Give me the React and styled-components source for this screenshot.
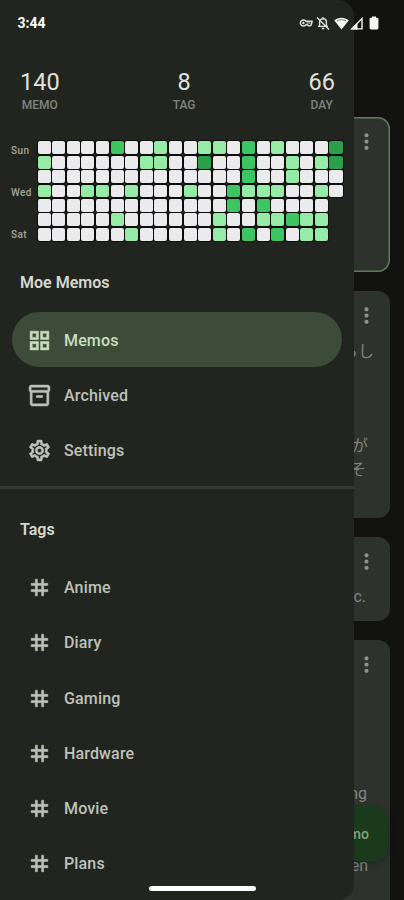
import React from 'react';
import styled, { createGlobalStyle } from 'styled-components';
import {
  MdOutlineGridView,
  MdOutlineInventory2,
  MdOutlineSettings,
  MdTag,
  MdMoreVert,
} from 'react-icons/md';

const stats = [
  { value: 140, label: 'MEMO' },
  { value: 8, label: 'TAG' },
  { value: 66, label: 'DAY' },
];

// one string per weekday, one digit per week (0 = no memos)
const weeks = [
  '000002001001102010003',
  '100000011003002001013',
  '000000000000002001000',
  '100110100010021110010',
  '00000000000002020000',
  '00000100000010011211',
  '00000010000010202011',
];

const levels = ['#ebeaec', '#96eba6', '#3cc560', '#2b9f4a'];

const menu = [
  { name: 'Memos', icon: MdOutlineGridView, active: true },
  { name: 'Archived', icon: MdOutlineInventory2 },
  { name: 'Settings', icon: MdOutlineSettings },
];

const tags = ['Anime', 'Diary', 'Gaming', 'Hardware', 'Movie', 'Plans'];

const StatusIcons = () => (
  <Icons>
    <svg width="14" height="10" viewBox="0 0 14 10">
      <path
        d="M7 3.2A3.1 3.1 0 1 0 7 6.8H8.4L10 8L12 7.4L13.2 3.2Z"
        fill="none"
        stroke="#dfe1dc"
        strokeWidth="1.5"
        strokeLinejoin="round"
      />
      <circle cx="4.4" cy="5" r="1.2" fill="#dfe1dc" />
      <path d="M7.5 5H11.5" stroke="#dfe1dc" strokeWidth="1" />
    </svg>
    <svg width="14" height="14" viewBox="0 0 14 14" fill="none" stroke="#dfe1dc" strokeWidth="1.4">
      <path d="M3.6 10V6.2C3.6 4.2 5 2.8 7 2.8S10.4 4.2 10.4 6.2V10M2 10.4h10M7 1v1.6" />
      <path d="M1 1.4l12 12" />
      <path d="M5.8 12.5h2.4" strokeWidth="1.6" />
    </svg>
    <svg width="15" height="13" viewBox="0 0 15 13">
      <path d="M0.3 3.6C4.3-.2 10.7-.2 14.7 3.6L7.5 12.6Z" fill="#f4f5f2" />
      <path d="M3 3.9C5.6 2.3 9.4 2.3 12 3.9" stroke="#6b6e68" strokeWidth=".9" fill="none" />
    </svg>
    <svg width="13" height="13" viewBox="0 0 13 13">
      <path d="M1.6 11.9L12 1.6V11.9Z" fill="none" stroke="#f4f5f2" strokeWidth="1.4" />
      <path d="M1 12.4L7.5 6V12.4Z" fill="#f4f5f2" />
    </svg>
    <svg width="10" height="14" viewBox="0 0 10 14">
      <path d="M3 .4h4v1.4h1.1q1.3 0 1.3 1.3v9q0 1.3-1.3 1.3H1.9Q.6 13.4.6 12.1v-9Q.6 1.8 1.9 1.8H3Z" fill="#f4f5f2" />
    </svg>
  </Icons>
);

const Heatmap = () => (
  <Calendar>
    <Days>
      <span>Sun</span>
      <span>Wed</span>
      <span>Sat</span>
    </Days>
    <Grid>
      {weeks.map((week, row) =>
        week.split('').map((level, col) => (
          <Cell key={`${row}-${col}`} $row={row + 1} $col={col + 1} $color={levels[level]} />
        ))
      )}
    </Grid>
  </Calendar>
);

const App = () => {
  return (
    <Screen>
      <GlobalStyle />
      <Feed>
        <Card $height={155} $pinned>
          <More />
        </Card>
        <Card $height={227}>
          <More />
          <Line $top={12} $right={16}>らし</Line>
          <Line $top={70} $right={22}>が</Line>
          <Line $right={24}>そ</Line>
        </Card>
        <Card $height={84}>
          <More />
          <Line $top={11} $right={24}>c.</Line>
        </Card>
        <Card $height={290}>
          <More />
          <Line $top={105} $right={23}>ng</Line>
          <Line $top={48} $right={22}>en</Line>
        </Card>
      </Feed>
      <NewMemo>mo</NewMemo>

      <Drawer>
        <Stats>
          {stats.map((stat) => (
            <Stat key={stat.label}>
              <h2>{stat.value}</h2>
              <h4>{stat.label}</h4>
            </Stat>
          ))}
        </Stats>
        <Heatmap />
        <Title>Moe Memos</Title>
        <List>
          {menu.map(({ name, icon: Icon, active }) => (
            <Item key={name} $active={active}>
              <Icon size={25} />
              {name}
            </Item>
          ))}
        </List>
        <Divider />
        <Title>Tags</Title>
        <List>
          {tags.map((tag) => (
            <Item key={tag}>
              <MdTag size={25} />
              {tag}
            </Item>
          ))}
        </List>
      </Drawer>

      <StatusBar>
        <Clock>3:44</Clock>
        <StatusIcons />
      </StatusBar>
      <HomeBar />
    </Screen>
  );
};

export default App;

const GlobalStyle = createGlobalStyle`
  * {
    box-sizing: border-box;
    margin: 0;
    padding: 0;
  }
  body {
    background: #121310;
    font-family: Roboto, "Noto Sans CJK JP", sans-serif;
  }
`;

const Screen = styled.div`
  position: relative;
  width: 404px;
  height: 900px;
  overflow: hidden;
  background: #121310;
`;

const Feed = styled.main`
  display: flex;
  flex-direction: column;
  gap: 19px;
  padding: 117px 14px 0;
`;

const Card = styled.article`
  display: flex;
  flex-direction: column;
  align-items: flex-end;
  flex-shrink: 0;
  height: ${(props) => props.$height}px;
  padding-top: 12px;
  border-radius: 12px;
  background: #2e322d;
  box-shadow: ${(props) => (props.$pinned ? 'inset 0 0 0 1.5px #60795e' : 'none')};
`;

const More = styled(MdMoreVert).attrs({ size: 25 })`
  flex-shrink: 0;
  margin-right: 11px;
  color: #8f928c;
`;

const Line = styled.p`
  margin-top: ${(props) => props.$top || 0}px;
  margin-right: ${(props) => props.$right}px;
  color: #80847e;
  font-size: 16px;
  line-height: 24px;
`;

const NewMemo = styled.button`
  position: absolute;
  right: 16px;
  bottom: 39px;
  width: 110px;
  height: 55px;
  padding-right: 19px;
  border: none;
  border-radius: 14px;
  background: #1b3a1b;
  box-shadow: 0 3px 6px rgba(0, 0, 0, 0.25);
  color: #82a57e;
  font: 500 14px Roboto, sans-serif;
  text-align: right;
`;

const Drawer = styled.nav`
  position: absolute;
  inset: 0 auto 0 0;
  width: 354px;
  padding-top: 67px;
  border-radius: 0 16px 16px 0;
  background: #22251f;
  overflow: hidden;
`;

const Stats = styled.div`
  display: flex;
  justify-content: space-between;
  padding: 0 19px 0 20px;
`;

const Stat = styled.div`
  display: flex;
  flex-direction: column;
  align-items: center;
  & h2 {
    color: #e0e2dc;
    font-size: 23.5px;
    font-weight: 400;
    line-height: 30px;
  }
  & h4 {
    color: #80837d;
    font-size: 12px;
    font-weight: 500;
    line-height: 16px;
  }
`;

const Calendar = styled.div`
  display: flex;
  height: 101px;
  margin-top: 28.4px;
  padding-left: 11px;
`;

const Days = styled.div`
  display: flex;
  flex-direction: column;
  justify-content: space-between;
  flex-shrink: 0;
  width: 26.6px;
  padding: 3px 0 0;
  color: #a2a59e;
  font-size: 10px;
  font-weight: 500;
  line-height: 14px;
  letter-spacing: 0.4px;
`;

const Grid = styled.div`
  display: grid;
  grid-template-columns: repeat(21, 13.1px);
  grid-template-rows: repeat(7, 12.9px);
  gap: 1.5px;
`;

const Cell = styled.i`
  grid-row: ${(props) => props.$row};
  grid-column: ${(props) => props.$col};
  border-radius: 2px;
  background: ${(props) => props.$color};
  box-shadow: 0 0 0 1px #0c0e0b;
`;

const Title = styled.h3`
  padding: 30.4px 20px 0;
  color: #d6d9d1;
  font-size: 16px;
  font-weight: 600;
  line-height: 20px;
`;

const List = styled.ul`
  padding: 19.4px 12px 8.6px;
  list-style: none;
`;

const Item = styled.li`
  display: flex;
  align-items: center;
  gap: 12px;
  height: 55.1px;
  padding: 1px 0 0 15px;
  border-radius: 28px;
  background: ${(props) => (props.$active ? '#3d4b39' : 'transparent')};
  color: ${(props) => (props.$active ? '#c9dfc0' : '#bfc2b9')};
  font-size: 16px;
  font-weight: 500;
  letter-spacing: 0.15px;
  & path:not([fill='none']) {
    stroke: currentColor;
    stroke-width: 0.5px;
  }
`;

const Divider = styled.hr`
  height: 3px;
  margin-bottom: 1px;
  border: none;
  background: #353832;
`;

const StatusBar = styled.header`
  position: absolute;
  inset: 0 0 auto;
  display: flex;
  align-items: center;
  justify-content: space-between;
  height: 46px;
  padding: 0 25px 0 17.5px;
`;

const Clock = styled.span`
  color: #fff;
  font-size: 14px;
  font-weight: 700;
`;

const Icons = styled.div`
  display: flex;
  align-items: center;
  & svg:nth-child(2) {
    margin: 0 4px 0 3px;
  }
  & svg:nth-child(3) {
    margin-right: 1px;
  }
  & svg:last-child {
    margin-left: 6px;
  }
`;

const HomeBar = styled.div`
  position: absolute;
  left: 149px;
  bottom: 9px;
  width: 107px;
  height: 5px;
  border-radius: 3px;
  background: #fff;
`;
